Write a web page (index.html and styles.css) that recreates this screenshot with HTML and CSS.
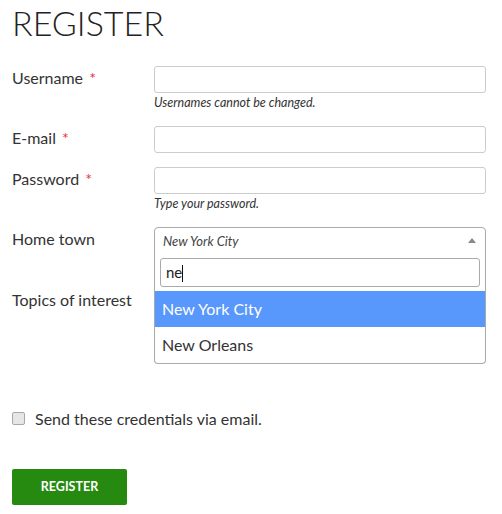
FILE: index.html
```html
<!DOCTYPE html>
<html lang="en">
<head>
    <meta charset="UTF-8">
    <meta name="viewport" content="width=device-width, initial-scale=1.0">
    <title>Register</title>
    <link rel="stylesheet" href="styles.css">
</head>
<body>
    <h1 class="page-title">REGISTER</h1>

    <form class="register-form">
        <div class="form-row">
            <label class="form-label">Username <span class="required">*</span></label>
            <div class="form-field">
                <input type="text" class="text-input">
                <div class="help">Usernames cannot be changed.</div>
            </div>
        </div>

        <div class="form-row">
            <label class="form-label">E-mail <span class="required">*</span></label>
            <div class="form-field">
                <input type="text" class="text-input">
            </div>
        </div>

        <div class="form-row">
            <label class="form-label">Password <span class="required">*</span></label>
            <div class="form-field">
                <input type="password" class="text-input">
                <div class="help">Type your password.</div>
            </div>
        </div>

        <div class="form-row form-row-wide">
            <label class="form-label">Home town</label>
            <div class="form-field">
                <div class="select-box is-open">
                    <span class="select-value">New York City</span>
                    <span class="select-arrow"></span>
                    <div class="select-dropdown">
                        <div class="select-search">
                            <div class="search-input">ne<span class="caret"></span></div>
                        </div>
                        <ul class="select-options">
                            <li class="option is-active">New York City</li>
                            <li class="option">New Orleans</li>
                        </ul>
                    </div>
                </div>
            </div>
        </div>

        <div class="form-row">
            <label class="form-label">Topics of interest</label>
            <div class="form-field">
                <input type="text" class="text-input">
            </div>
        </div>

        <label class="check-row">
            <input type="checkbox" class="check">
            <span>Send these credentials via email.</span>
        </label>

        <button type="button" class="btn-register">Register</button>
    </form>
</body>
</html>
```

FILE: styles.css
```css
body {
    font-family: Lato, "Open Sans", sans-serif;
    color: #333;
    background: #fff;
    margin: 0;
    padding: 0 12px;
}
.page-title {
    font-size: 34px;
    font-weight: 300;
    line-height: 1.2;
    color: #222;
    margin: 3px 0 22px;
}
.form-row {
    display: grid;
    grid-template-columns: 142px 332px;
    margin-bottom: 14px;
}
.form-row-wide {
    margin-bottom: 33px;
}
.form-label {
    font-size: 16px;
    line-height: 18px;
    padding-top: 3px;
}
.required {
    color: #e8333a;
    margin-left: 2px;
}
.text-input {
    display: block;
    box-sizing: border-box;
    width: 100%;
    height: 27px;
    margin: 0;
    border: 1px solid #ccc;
    border-radius: 3px;
    font-family: inherit;
    font-size: 14px;
}
.help {
    font-size: 12.5px;
    font-style: italic;
    line-height: 19px;
    color: #333;
}
.select-box {
    position: relative;
    box-sizing: border-box;
    height: 28px;
    border: 1px solid #aaa;
    border-radius: 4px;
    padding: 0 8px;
    display: flex;
    align-items: center;
}
.select-box.is-open {
    border-radius: 4px 4px 0 0;
}
.select-value {
    flex: 1;
    font-size: 13px;
    font-style: italic;
    color: #444;
}
.select-arrow {
    width: 0;
    height: 0;
    border-left: 4px solid transparent;
    border-right: 4px solid transparent;
    border-bottom: 5px solid #888;
    margin-right: 1px;
    margin-top: -1px;
}
.select-dropdown {
    position: absolute;
    top: 100%;
    left: -1px;
    right: -1px;
    background: #fff;
    border: 1px solid #aaa;
    border-top: 0;
    border-radius: 0 0 4px 4px;
    z-index: 10;
}
.select-search {
    padding: 4px 5px;
}
.search-input {
    box-sizing: border-box;
    height: 29px;
    border: 1px solid #aaa;
    border-radius: 3px;
    padding: 0 5px;
    font-size: 15px;
    line-height: 27px;
    color: #222;
}
.caret {
    display: inline-block;
    width: 1px;
    height: 17px;
    background: #111;
    vertical-align: -4px;
}
.select-options {
    list-style: none;
    margin: 0;
    padding: 0;
}
.option {
    height: 36px;
    line-height: 36px;
    padding: 0 7px;
    font-size: 16px;
    color: #333;
}
.option.is-active {
    background: #5897fb;
    color: #fff;
}
.check-row {
    display: flex;
    align-items: center;
    gap: 10px;
    margin-top: 95px;
    font-size: 16px;
    line-height: 18px;
}
.check {
    appearance: none;
    width: 13px;
    height: 13px;
    margin: 0;
    border: 1px solid #a8a8a8;
    border-radius: 2px;
    background: #e6e6e6;
}
.btn-register {
    display: block;
    margin-top: 41px;
    width: 115px;
    height: 36px;
    border: none;
    border-radius: 2px;
    background: #268a10;
    color: #fff;
    font-family: inherit;
    font-size: 12.5px;
    font-weight: 700;
    text-transform: uppercase;
    cursor: pointer;
}
```
